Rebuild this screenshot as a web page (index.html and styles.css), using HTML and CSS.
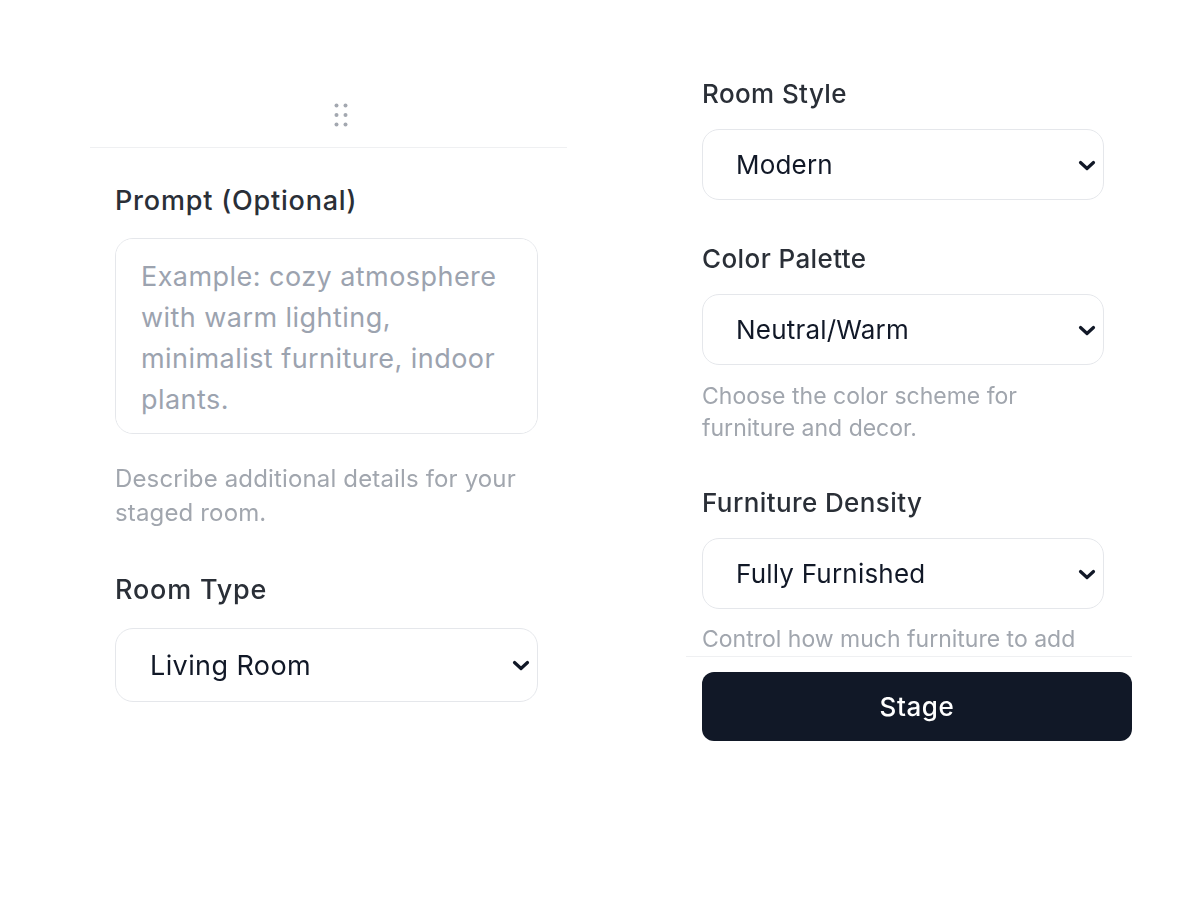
FILE: index.html
```html
<!DOCTYPE html>
<html lang="en">
<head>
<meta charset="utf-8">
<title>Stage Room</title>
<link rel="stylesheet" href="styles.css">
</head>
<body>
<div class="page">
  <section class="panel panel-left">
    <div class="handle-bar">
      <svg class="handle" width="14" height="24" viewBox="0 0 14 24" aria-hidden="true">
        <circle cx="2.5" cy="2.5" r="2"/><circle cx="11.5" cy="2.5" r="2"/>
        <circle cx="2.5" cy="12" r="2"/><circle cx="11.5" cy="12" r="2"/>
        <circle cx="2.5" cy="21.5" r="2"/><circle cx="11.5" cy="21.5" r="2"/>
      </svg>
    </div>
    <div class="panel-body">
      <label class="label label-l label-first" for="prompt">Prompt (Optional)</label>
      <textarea id="prompt" class="textarea" placeholder="Example: cozy atmosphere with warm lighting, minimalist furniture, indoor plants."></textarea>
      <p class="help help-left">Describe additional details for your staged room.</p>
      <label class="label label-l label-next" for="roomType">Room Type</label>
      <div class="select-wrap">
        <select id="roomType" class="select select-left">
          <option>Living Room</option>
          <option>Bedroom</option>
          <option>Dining Room</option>
        </select>
        <svg class="chevron" width="18" height="11" viewBox="0 0 18 11" aria-hidden="true"><path d="M2.5 2.5 L9 8.5 L15.5 2.5"/></svg>
      </div>
    </div>
  </section>

  <section class="panel panel-right">
    <div class="fields">
      <label class="label label-r r-first" for="roomStyle">Room Style</label>
      <div class="select-wrap">
        <select id="roomStyle" class="select select-right">
          <option>Modern</option>
          <option>Scandinavian</option>
        </select>
        <svg class="chevron" width="18" height="11" viewBox="0 0 18 11" aria-hidden="true"><path d="M2.5 2.5 L9 8.5 L15.5 2.5"/></svg>
      </div>

      <label class="label label-r r-next" for="palette">Color Palette</label>
      <div class="select-wrap">
        <select id="palette" class="select select-right">
          <option>Neutral/Warm</option>
          <option>Cool</option>
        </select>
        <svg class="chevron" width="18" height="11" viewBox="0 0 18 11" aria-hidden="true"><path d="M2.5 2.5 L9 8.5 L15.5 2.5"/></svg>
      </div>
      <p class="help help-right">Choose the color scheme for furniture and decor.</p>

      <label class="label label-r r-next" for="density">Furniture Density</label>
      <div class="select-wrap">
        <select id="density" class="select select-right">
          <option>Fully Furnished</option>
          <option>Minimal</option>
        </select>
        <svg class="chevron" width="18" height="11" viewBox="0 0 18 11" aria-hidden="true"><path d="M2.5 2.5 L9 8.5 L15.5 2.5"/></svg>
      </div>
      <p class="help help-right help-last">Control how much furniture to add</p>
    </div>
    <div class="footer">
      <button class="stage-btn" type="button">Stage</button>
    </div>
  </section>
</div>
</body>
</html>
```

FILE: styles.css
```css
* { box-sizing: border-box; }

html, body {
  margin: 0;
  padding: 0;
  background: #ffffff;
}

body {
  font-family: Inter, "Noto Sans", "Liberation Sans", sans-serif;
  color: #1f2937;
  width: 1200px;
  height: 900px;
  overflow: hidden;
}

.page {
  display: flex;
  align-items: flex-start;
}

/* ---------- left panel ---------- */
.panel-left {
  margin-left: 90px;
  width: 477px;
}

.handle-bar {
  display: flex;
  padding: 103px 0 20px 244px;
  border-bottom: 1px solid #eff0f2;
}

.handle { fill: #a3a8b0; display: block; }

.panel-body {
  display: flex;
  flex-direction: column;
  padding: 0 29px 0 25px;
}

.label {
  display: block;
  line-height: 34px;
  font-weight: 500;
  color: #2a2f37;
}

.label-l { font-size: 27px; letter-spacing: 0.8px; }
.label-r { font-size: 26px; letter-spacing: 0.4px; }

.label-first { margin-top: 36px; margin-bottom: 20px; }
.label-next { margin-top: 43px; margin-bottom: 21px; }

.textarea {
  display: block;
  width: 423px;
  height: 196px;
  padding: 17px 20px 14px 25px;
  border: 1px solid #e5e7eb;
  border-radius: 18px;
  font-family: inherit;
  font-size: 27px;
  letter-spacing: 0.45px;
  line-height: 41px;
  color: #111827;
  resize: none;
  outline: none;
}

.textarea::placeholder { color: #9ca3af; }

.help {
  margin: 0;
  color: #a1a6ae;
}

.help-left {
  margin-top: 28px;
  font-size: 24px;
  letter-spacing: 0.15px;
  line-height: 34px;
}

.help-right {
  max-width: 402px;
  margin-top: 15px;
  font-size: 23px;
  line-height: 32px;
}

.help-last { margin-top: 14px; margin-bottom: 1px; max-width: none; }

/* ---------- selects ---------- */
.select-wrap {
  position: relative;
  align-self: flex-start;
}

.select {
  display: block;
  -webkit-appearance: none;
  appearance: none;
  background: #ffffff;
  border: 1px solid #e5e7eb;
  font-family: inherit;
  font-weight: 400;
  color: #111827;
  outline: none;
  margin: 0;
}

.select-left {
  width: 423px;
  height: 74px;
  border-radius: 18px;
  padding: 0 0 0 34px;
  font-size: 27px;
  letter-spacing: 0.4px;
}

.select-right {
  width: 402px;
  height: 71px;
  border-radius: 17px;
  padding: 0 0 0 33px;
  font-size: 26px;
  letter-spacing: 0.2px;
}

.chevron {
  position: absolute;
  right: 8px;
  top: 50%;
  margin-top: -5px;
  fill: none;
  stroke: #111827;
  stroke-width: 3.2;
  stroke-linecap: round;
  stroke-linejoin: round;
  pointer-events: none;
}

/* ---------- right panel ---------- */
.panel-right {
  margin-left: 119px;
  width: 446px;
}

.fields {
  display: flex;
  flex-direction: column;
  padding-left: 16px;
}

.r-first { margin-top: 77px; margin-bottom: 18px; }
.r-next { margin-top: 42px; margin-bottom: 18px; }

.footer {
  border-top: 1px solid #eff0f2;
  padding: 15px 0 0 16px;
}

.stage-btn {
  display: block;
  width: 430px;
  height: 69px;
  border: none;
  border-radius: 12px;
  background: #111827;
  color: #ffffff;
  font-family: inherit;
  font-size: 26px;
  letter-spacing: 0.6px;
  font-weight: 500;
  cursor: pointer;
}
```
